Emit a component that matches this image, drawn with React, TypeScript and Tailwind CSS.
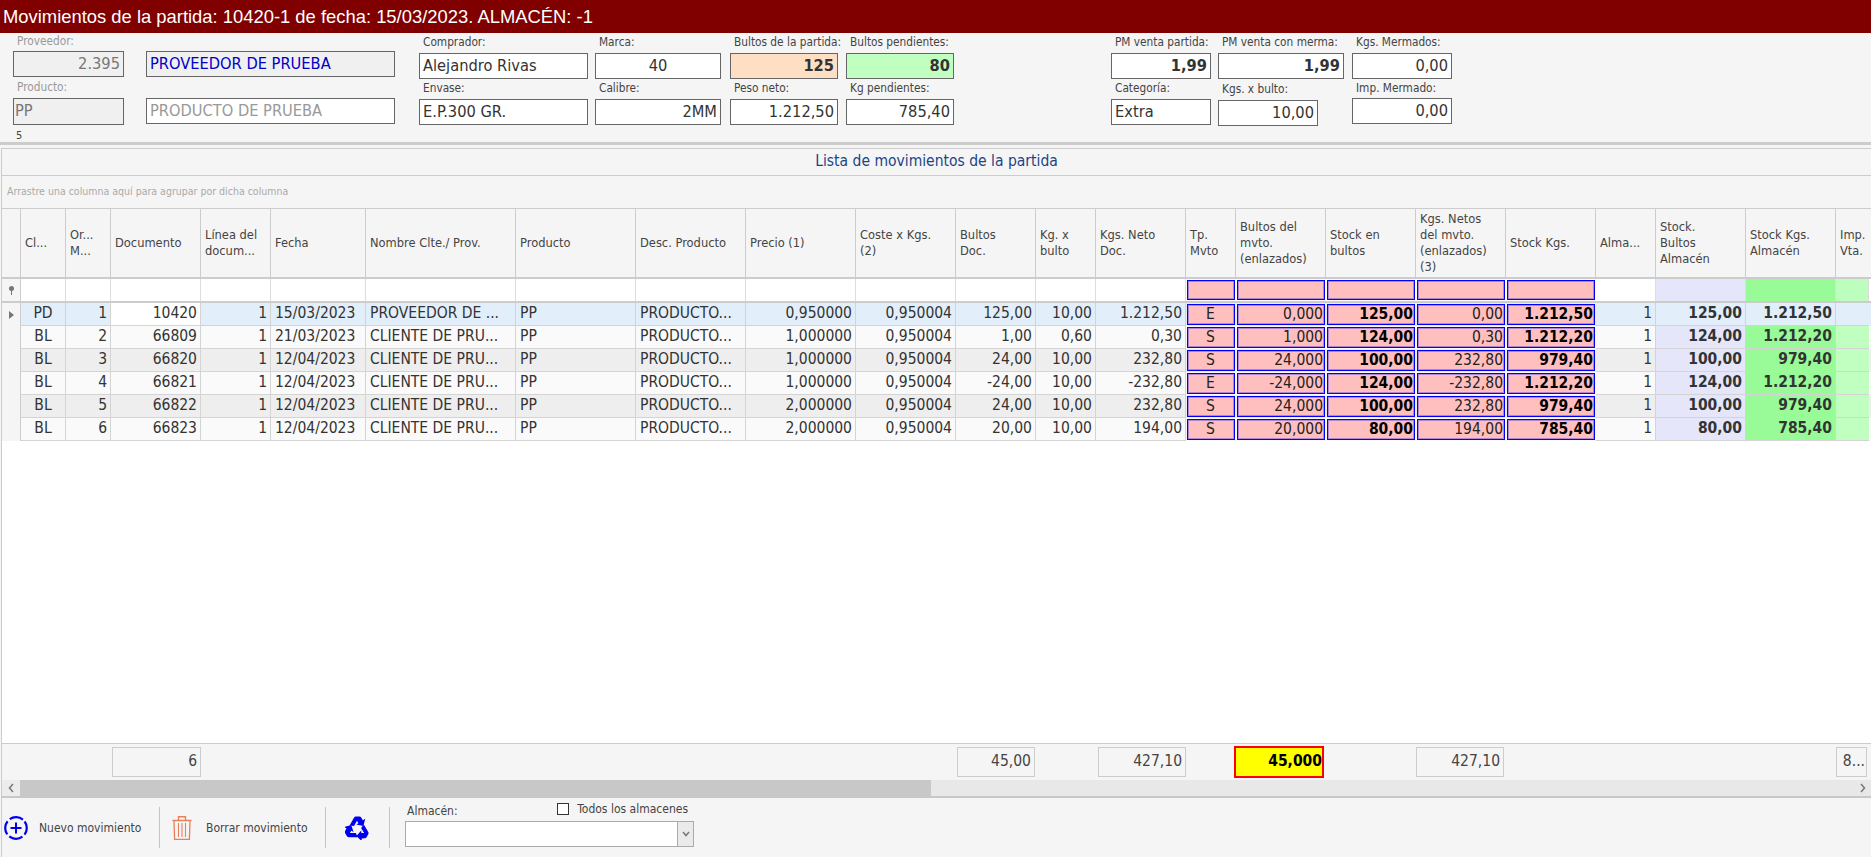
import React from 'react';

const COLS = 'grid grid-cols-[19px_45px_45px_90px_70px_95px_150px_120px_110px_110px_100px_80px_60px_90px_50px_90px_90px_90px_90px_60px_90px_90px_33px]';
const FONT = 'font-["DejaVu_Sans",sans-serif] font-stretch-condensed';

const headers = [
    '', 'Cl...', 'Or...\nM...', 'Documento', 'Línea del\ndocum...', 'Fecha', 'Nombre Clte./ Prov.', 'Producto',
    'Desc. Producto', 'Precio (1)', 'Coste x Kgs.\n(2)', 'Bultos\nDoc.', 'Kg. x\nbulto', 'Kgs. Neto\nDoc.', 'Tp.\nMvto',
    'Bultos del\nmvto.\n(enlazados)', 'Stock en\nbultos', 'Kgs. Netos\ndel mvto.\n(enlazados)\n(3)', 'Stock Kgs.', 'Alma...',
    'Stock.\nBultos\nAlmacén', 'Stock Kgs.\nAlmacén', 'Imp.\nVta.',
];

const rows = [
    ['PD', '1', '10420', '1', '15/03/2023', 'PROVEEDOR DE ...', 'PP', 'PRODUCTO...', '0,950000', '0,950004', '125,00', '10,00', '1.212,50', 'E', '0,000', '125,00', '0,00', '1.212,50', '1', '125,00', '1.212,50'],
    ['BL', '2', '66809', '1', '21/03/2023', 'CLIENTE DE PRU...', 'PP', 'PRODUCTO...', '1,000000', '0,950004', '1,00', '0,60', '0,30', 'S', '1,000', '124,00', '0,30', '1.212,20', '1', '124,00', '1.212,20'],
    ['BL', '3', '66820', '1', '12/04/2023', 'CLIENTE DE PRU...', 'PP', 'PRODUCTO...', '1,000000', '0,950004', '24,00', '10,00', '232,80', 'S', '24,000', '100,00', '232,80', '979,40', '1', '100,00', '979,40'],
    ['BL', '4', '66821', '1', '12/04/2023', 'CLIENTE DE PRU...', 'PP', 'PRODUCTO...', '1,000000', '0,950004', '-24,00', '10,00', '-232,80', 'E', '-24,000', '124,00', '-232,80', '1.212,20', '1', '124,00', '1.212,20'],
    ['BL', '5', '66822', '1', '12/04/2023', 'CLIENTE DE PRU...', 'PP', 'PRODUCTO...', '2,000000', '0,950004', '24,00', '10,00', '232,80', 'S', '24,000', '100,00', '232,80', '979,40', '1', '100,00', '979,40'],
    ['BL', '6', '66823', '1', '12/04/2023', 'CLIENTE DE PRU...', 'PP', 'PRODUCTO...', '2,000000', '0,950004', '20,00', '10,00', '194,00', 'S', '20,000', '80,00', '194,00', '785,40', '1', '80,00', '785,40'],
];

// columns with text on the left / centered, the others are numbers
const LEFT = [4, 5, 6, 7];
const CENTER = [0, 13];
const RED = [13, 14, 15, 16, 17];
const BOLD = [15, 17];
const RED_BOX = 'bg-[#ffbfbf] border border-[#0000ff] shadow-[inset_0_0_0_1px_rgba(0,0,255,0.3)]';

interface FieldProps {
    label?: string;
    value?: string;
    labelClass?: string;
    boxClass?: string;
}

const Field: React.FC<FieldProps> = ({ label, value, labelClass = 'h-[20px]', boxClass = '' }) => (
    <div className="flex flex-col">
        <div className={`flex items-center pl-[4px] text-[11.75px] leading-none text-[#444] whitespace-nowrap ${labelClass}`}>{label}</div>
        <div className={`border border-[#666] flex items-center px-[3px] text-[16.3px] whitespace-nowrap overflow-hidden ${boxClass}`}>{value}</div>
    </div>
);

const Header = () => (
    <div className={`${COLS} h-[70px] bg-[#f5f5f5] border-b-2 border-[#ccc] overflow-hidden`}>
        {headers.map((h, i) => (
            <div key={i} className="border-r border-[#ccc] flex items-center pl-[4px] text-[12.75px] leading-[16px] text-[#444] whitespace-pre last:border-r-0">
                {h}
            </div>
        ))}
    </div>
);

const FilterRow = () => (
    <div className={`${COLS} h-[24px] bg-white border-b-2 border-[#ccc]`}>
        <div className="border-r border-[#ccc] bg-[#f5f5f5] flex items-center justify-center">
            <svg width="7" height="9" viewBox="0 0 7 9"><circle cx="3.5" cy="2.5" r="2.5" fill="#777" /><rect x="3" y="4" width="1" height="5" fill="#777" /></svg>
        </div>
        {headers.slice(1).map((_, i) => {
            if (RED.includes(i)) {
                return <div key={i} className="p-[1px]"><div className={`h-full ${RED_BOX}`} /></div>;
            }
            const bg = i === 19 ? 'bg-[#e6e6fa]' : i === 20 ? 'bg-[#98fb98]' : i === 21 ? 'bg-[#bdfdbd]' : '';
            return <div key={i} className={`border-r border-[#ddd] ${bg}`} />;
        })}
    </div>
);

const Row: React.FC<{ cells: string[]; index: number }> = ({ cells, index }) => {
    const selected = index === 0;
    const rowBg = selected ? 'bg-[#e2effa]' : index % 2 === 0 ? 'bg-[#eeeeee]' : 'bg-[#fafafa]';
    return (
        <div className={`${COLS} h-[23px] text-[15.5px] text-[#333] ${rowBg}`}>
            <div className="bg-[#f5f5f5] border-r border-[#ccc] flex items-center justify-center">
                {selected && <svg width="5" height="8" viewBox="0 0 5 8"><path d="M0 0 L5 4 L0 8 Z" fill="#777" /></svg>}
            </div>
            {cells.map((c, i) => {
                if (RED.includes(i)) {
                    return (
                        <div key={i} className="p-[1px]">
                            <div className={`h-full ${RED_BOX} flex items-center overflow-hidden pr-[1px] text-[#222] leading-none ${i === 13 ? 'justify-center' : 'justify-end'} ${BOLD.includes(i) ? 'font-bold !text-black' : ''}`}>
                                {c}
                            </div>
                        </div>
                    );
                }
                let cls = 'justify-end pr-[3px]';
                if (LEFT.includes(i)) cls = 'justify-start pl-[4px]';
                if (CENTER.includes(i)) cls = 'justify-center';
                let bg = '';
                if (i === 2 && selected) bg = 'bg-white';
                if (i === 19 && !selected) bg = 'bg-[#e6e6fa]';
                if (i === 20 && !selected) bg = 'bg-[#98fb98]';
                const weight = i === 19 || i === 20 ? 'font-bold' : '';
                return (
                    <div key={i} className={`flex items-center border-r border-b border-[#d4d4d4] whitespace-nowrap overflow-hidden ${cls} ${bg} ${weight}`}>
                        {c}
                    </div>
                );
            })}
            <div className={`border-b border-[#d4d4d4] ${selected ? '' : 'bg-[#c0ffc0]'}`} />
        </div>
    );
};

const TotalBox: React.FC<{ value: string; className: string }> = ({ value, className }) => (
    <div className={`h-[30px] flex items-center justify-end pr-[3px] border border-[#ccc] text-[15.5px] text-[#444] whitespace-nowrap overflow-hidden ${className}`}>{value}</div>
);

const Footer = () => (
    <div className="h-[37px] bg-[#f5f5f5] border-t border-[#ccc] pt-[3px] flex">
        <TotalBox value="6" className="ml-[110px] w-[89px]" />
        <TotalBox value="45,00" className="ml-[756px] w-[78px]" />
        <TotalBox value="427,10" className="ml-[63px] w-[88px]" />
        <div className="ml-[48px] w-[90px] h-[32px] -mt-[1px] flex items-center justify-end border-2 border-[#ff0000] bg-[#ffff00] text-[15.5px] font-bold text-black">45,000</div>
        <TotalBox value="427,10" className="ml-[92px] w-[88px]" />
        <TotalBox value="8..." className="ml-[332px] w-[31px] !pr-[1px]" />
    </div>
);

const ScrollBar = () => (
    <div className="h-[18px] flex bg-[#e8e8e8] border-b-2 border-[#c8c8c8] text-[#777]">
        <div className="w-[18px] bg-[#ececec] flex items-center justify-center">
            <svg width="7" height="10" viewBox="0 0 7 10" fill="none" stroke="#777" strokeWidth="1.5"><path d="M5 1 L1.5 5 L5 9" /></svg>
        </div>
        <div className="w-[911px] bg-[#c8c8c8]" />
        <div className="flex-1" />
        <div className="w-[18px] flex items-center justify-center">
            <svg width="7" height="10" viewBox="0 0 7 10" fill="none" stroke="#777" strokeWidth="1.5"><path d="M2 1 L5.5 5 L2 9" /></svg>
        </div>
    </div>
);

const PlusIcon = () => (
    <svg width="24" height="24" viewBox="0 0 24 24" fill="none" stroke="#0000f0">
        <circle cx="12" cy="12" r="10.8" strokeWidth="2.2" strokeDasharray="13.96 3" transform="rotate(-37 12 12)" />
        <path d="M12 6.5 V17.5 M6.5 12 H17.5" strokeWidth="2" />
    </svg>
);

const TrashIcon = () => (
    <svg width="20" height="24" viewBox="0 0 20 24" fill="none" stroke="#e8805c" strokeWidth="1.1">
        <path d="M0.5 4.5 H19.5 M6.5 4 V0.8 H13.5 V4" strokeWidth="1.4" />
        <path d="M2 5 L2.6 23.4 H17.4 L18 5" strokeWidth="1.3" />
        <path d="M6.5 7 V21 M10 7 V21 M13.5 7 V21" />
    </svg>
);

// chunky three arrows, one segment drawn and turned twice
const RecycleIcon = () => {
    const seg = 'M4.6 9.4 L8.8 2 Q9.6 0.6 11 0.6 H14.4 Q15.6 0.6 16.2 1.6 L17.8 4.2 L20.2 2.8 L18.4 10 L11.2 8.6 L13.4 7.2 L12 4.8 L9 10 Z';
    return (
        <svg width="24" height="24" viewBox="0 0 24 24" fill="#0000f0">
            <path d={seg} />
            <path d={seg} transform="rotate(120 12 13)" />
            <path d={seg} transform="rotate(240 12 13)" />
        </svg>
    );
};

const Sep = () => <div className="w-px h-[41px] bg-[#c4c4c4]" />;

export default function App() {
    return (
        <div className={`w-[1871px] h-[857px] flex flex-col overflow-hidden bg-[#f5f5f5] ${FONT}`}>
            <div className="h-[33px] shrink-0 bg-[#800000] flex items-center pl-[3px] text-[18.4px] text-white font-['Liberation_Sans',sans-serif] font-stretch-normal">
                Movimientos de la partida: 10420-1 de fecha: 15/03/2023. ALMACÉN: -1
            </div>

            {/* top fields */}
            <div className="h-[112px] shrink-0 flex pl-[13px] border-b-[3px] border-[#ccc] text-[#333]">
                <div className="w-[111px] flex flex-col">
                    <Field label="Proveedor:" value="2.395" labelClass="h-[18px] text-[#999]" boxClass="h-[26px] justify-end bg-[#f0f0f0] text-[#777]" />
                    <Field label="Producto:" value="PP" labelClass="h-[21px] text-[#999]" boxClass="h-[27px] bg-[#f0f0f0] text-[#777] !px-[1px]" />
                    <div className="pl-[3px] pt-[3px] text-[11px] text-[#444]">5</div>
                </div>
                <div className="ml-[22px] w-[249px] flex flex-col">
                    <Field value="PROVEEDOR DE PRUEBA" labelClass="h-[18px]" boxClass="h-[26px] bg-[#f0f0f0] text-[#0000c8]" />
                    <Field value="PRODUCTO DE PRUEBA" labelClass="h-[21px]" boxClass="h-[26px] bg-white text-[#999]" />
                </div>
                <div className="ml-[24px] w-[169px] flex flex-col">
                    <Field label="Comprador:" value="Alejandro Rivas" boxClass="h-[26px] bg-white" />
                    <Field label="Envase:" value="E.P.300 GR." boxClass="h-[26px] bg-white" />
                </div>
                <div className="ml-[7px] w-[126px] flex flex-col">
                    <Field label="Marca:" value="40" boxClass="h-[26px] bg-white justify-center" />
                    <Field label="Calibre:" value="2MM" boxClass="h-[26px] bg-white justify-end" />
                </div>
                <div className="ml-[9px] w-[108px] flex flex-col">
                    <Field label="Bultos de la partida:" value="125" boxClass="h-[26px] bg-[#ffdfc4] justify-end font-bold" />
                    <Field label="Peso neto:" value="1.212,50" boxClass="h-[26px] bg-white justify-end" />
                </div>
                <div className="ml-[8px] w-[108px] flex flex-col">
                    <Field label="Bultos pendientes:" value="80" boxClass="h-[26px] bg-[#c0ffc0] justify-end font-bold" />
                    <Field label="Kg pendientes:" value="785,40" boxClass="h-[26px] bg-white justify-end" />
                </div>
                <div className="ml-[157px] w-[100px] flex flex-col">
                    <Field label="PM venta partida:" value="1,99" boxClass="h-[26px] bg-white justify-end font-bold" />
                    <Field label="Categoría:" value="Extra" boxClass="h-[26px] bg-white" />
                </div>
                <div className="ml-[7px] w-[126px] flex flex-col">
                    <Field label="PM venta con merma:" value="1,99" boxClass="h-[26px] bg-white justify-end font-bold" />
                    <Field label="Kgs. x bulto:" value="10,00" labelClass="h-[21px]" boxClass="h-[26px] w-[100px] bg-white justify-end" />
                </div>
                <div className="ml-[8px] w-[100px] flex flex-col">
                    <Field label="Kgs. Mermados:" value="0,00" boxClass="h-[26px] bg-white justify-end" />
                    <Field label="Imp. Mermado:" value="0,00" labelClass="h-[19px]" boxClass="h-[26px] bg-white justify-end" />
                </div>
            </div>

            {/* grid panel */}
            <div className="flex-1 min-h-0 flex flex-col mt-[3px] ml-[1px] border-l border-[#ccc] border-t border-t-[#ccc] overflow-hidden">
                <div className="h-[27px] shrink-0 flex items-center justify-center text-[15.5px] text-[#1c4587] border-b border-[#ccc]">
                    Lista de movimientos de la partida
                </div>
                <div className="h-[33px] shrink-0 flex items-center pl-[5px] text-[10.5px] text-[#aaa] border-b border-[#ccc]">
                    Arrastre una columna aquí para agrupar por dicha columna
                </div>
                <Header />
                <FilterRow />
                {rows.map((r, i) => <Row key={i} cells={r} index={i} />)}
                <div className="flex-1 bg-white" />
                <Footer />
                <ScrollBar />
            </div>

            {/* bottom toolbar */}
            <div className="h-[59px] shrink-0 ml-[1px] border-l border-[#ccc] flex items-center text-[#444] text-[12px]">
                <div className="ml-[2px] w-[155px] flex items-center gap-[11px]"><PlusIcon />Nuevo movimiento</div>
                <Sep />
                <div className="ml-[12px] w-[153px] flex items-center gap-[14px]"><TrashIcon />Borrar movimiento</div>
                <Sep />
                <div className="ml-[19px] w-[44px]"><RecycleIcon /></div>
                <Sep />
                <div className="ml-[15px] w-[289px] self-start pt-[2px] flex flex-col">
                    <div className="flex justify-between items-end h-[21px] pl-[2px] pb-[1px]">
                        <span>Almacén:</span>
                        <label className="flex items-center gap-[8px] pr-[6px] mb-[2px]">
                            <span className="w-[12px] h-[12px] border border-[#333] bg-white" />
                            Todos los almacenes
                        </label>
                    </div>
                    <div className="h-[26px] border border-[#aaa] bg-white flex justify-end">
                        <div className="w-[16px] bg-[#eaeaea] border-l border-[#aaa] flex items-center justify-center">
                            <svg width="8" height="6" viewBox="0 0 8 6" fill="none" stroke="#777" strokeWidth="1.5"><path d="M1 1 L4 4.5 L7 1" /></svg>
                        </div>
                    </div>
                </div>
            </div>
        </div>
    );
}
